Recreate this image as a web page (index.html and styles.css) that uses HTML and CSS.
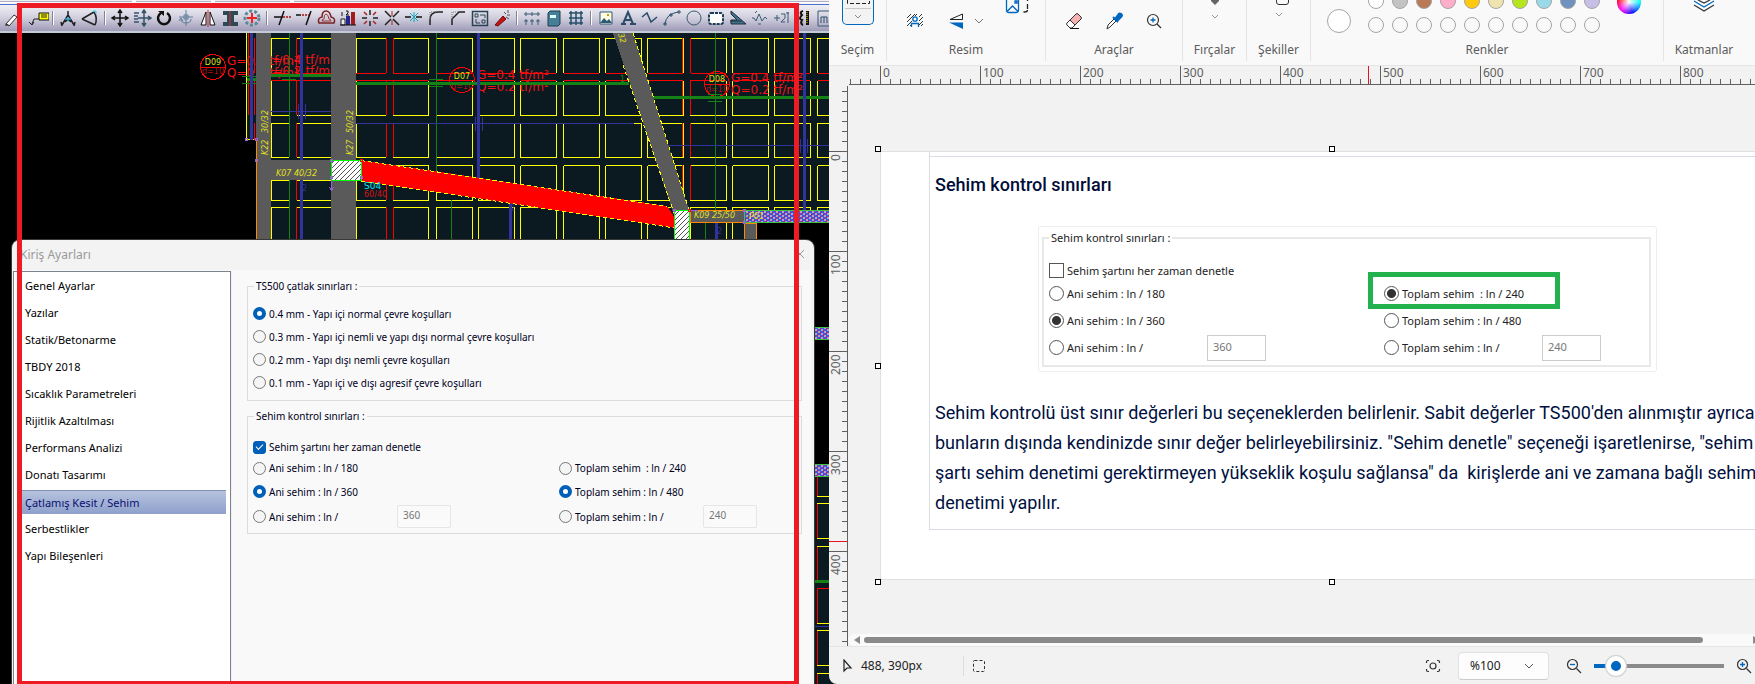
FILE: index.html
```html
<!DOCTYPE html>
<html lang="tr">
<head>
    <meta charset="UTF-8">
    <meta name="viewport" content="width=device-width, initial-scale=1.0">
    <title>Kiriş Ayarları</title>
    <link rel="stylesheet" href="styles.css">
</head>
<body>
    <div class="desktop">

        <!-- CAD window -->
        <section class="cad">
            <div class="cad-tabs"><span></span><span></span><span></span><span></span></div>
            <div class="cad-toolbar">
                <button aria-label="Kalem"><svg viewBox="0 0 22 22"><path d="M6 17l8-9 3 2-8 9z" fill="#fff" stroke="#333"/><path d="M5 19l4-1-3-2z" fill="#333"/></svg></button>
                <button class="first" aria-label="Not"><svg viewBox="0 0 22 22"><path d="M12 6h10v7H12z" fill="#ff0" stroke="#111"/><path d="M14 8h6M14 10h6M12 12H7l-2 5M2 15l3 3 2-3" stroke="#222" fill="none"/></svg></button>
                <i class="sep"></i>
                <button aria-label="Pergel"><svg viewBox="0 0 22 22"><path d="M11 4v4L5 18M11 8l6 10M4 15l1 4M18 15l-1 4M8 15l3-3 3 3" stroke="#222" fill="none" stroke-width="1.5"/><path d="M8 12h6M11 10v5" stroke="#3cf"/></svg></button>
                <button aria-label="Açı"><svg viewBox="0 0 22 22"><path d="M3 12L15 5M3 12l13 6M15 5q4 6 1 13" stroke="#222" fill="none" stroke-width="1.5"/><path d="M14 4h3v3" stroke="#3cf" fill="none"/></svg></button>
                <i class="sep"></i>
                <button aria-label="Taşı"><svg viewBox="0 0 22 22"><path d="M11 4v14M4 11h14M9 6l2-3 2 3M9 16l2 3 2-3M6 9l-3 2 3 2M16 9l3 2-3 2" stroke="#111" fill="none" stroke-width="1.5"/></svg></button>
                <button aria-label="Kopyala"><svg viewBox="0 0 22 22"><path d="M13 4v14M7 11h12M11 6l2-3 2 3M11 16l2 3 2-3M17 9l3 2-3 2M3 6h5M3 9h4M3 12h4M3 15h5" stroke="#34516a" fill="none" stroke-width="1.5"/></svg></button>
                <button aria-label="Döndür"><svg viewBox="0 0 22 22"><path d="M8 6a6 6 0 1 0 6 0" stroke="#111" fill="none" stroke-width="2.5"/><path d="M5 4h6v5z" fill="#111"/></svg></button>
                <button aria-label="Eksen"><svg viewBox="0 0 22 22"><path d="M11 3v16M4 10h14M6 12q0 4 5 4t5-4M4 14l2-3 2 3M9 8h4v4H9z" stroke="#5c7d99" fill="none"/></svg></button>
                <button aria-label="Aynala"><svg viewBox="0 0 22 22"><path d="M9 5v13H4zM13 5v13h5z" fill="#fff" stroke="#111"/><path d="M11 3v17" stroke="#c22"/></svg></button>
                <button aria-label="Kolon"><svg viewBox="0 0 22 22"><path d="M4 4h15v4h-4v7h4v4H4v-4h4V8H4z" fill="#2c4a56"/><path d="M11 4v15" stroke="#e22"/></svg></button>
                <button aria-label="Merkez"><svg viewBox="0 0 22 22"><circle cx="11" cy="11" r="7" fill="none" stroke="#5a8898" stroke-width="3" stroke-dasharray="3 2"/><path d="M11 6v10M6 11h10" stroke="#e22" stroke-width="2"/></svg></button>
                <i class="sep"></i>
                <button aria-label="Kırp"><svg viewBox="0 0 22 22"><path d="M3 10h9M13 4L8 18" stroke="#111" stroke-width="1.5"/><path d="M12 10h8" stroke="#a11" stroke-dasharray="2 1" stroke-width="1.5"/></svg></button>
                <button aria-label="Uzat"><svg viewBox="0 0 22 22"><path d="M3 8h5M18 4l-5 14" stroke="#111" stroke-width="1.5"/><path d="M9 8h7" stroke="#a11" stroke-dasharray="2 1" stroke-width="1.5"/></svg></button>
                <button aria-label="Ofset"><svg viewBox="0 0 22 22"><path d="M4 16q-2-5 3-6q0-6 4-6t5 6q5 1 3 6z" fill="none" stroke="#722" stroke-width="1.5"/><path d="M7 14q0-2 2-2q0-5 2-5t3 5q2 0 2 2z" fill="none" stroke="#933"/></svg></button>
                <button aria-label="Sıra"><svg viewBox="0 0 22 22"><path d="M4 12v6h4v-6z" fill="#eee" stroke="#222"/><path d="M9 9h4v9H9z" fill="#22258c"/><path d="M14 5h4v13h-4z" fill="#a51a1a"/><path d="M3 18h16M5 5v4M9 4h2v2l-2 2h3" stroke="#111" fill="none"/></svg></button>
                <button aria-label="Kır"><svg viewBox="0 0 22 22"><path d="M11 3v5M11 14v5M3 11h5M14 11h5" stroke="#222" stroke-width="1.5"/><path d="M5 5l3 3M17 5l-3 3M5 17l3-3M17 17l-3-3" stroke="#a22" stroke-width="1.5"/></svg></button>
                <button aria-label="Patlat"><svg viewBox="0 0 22 22"><path d="M4 4l6 6M18 4l-6 6M4 18l6-6M18 18l-6-6" stroke="#222" stroke-width="1.5"/><path d="M11 4v5M11 13v5" stroke="#a22"/></svg></button>
                <button aria-label="Birleştir"><svg viewBox="0 0 22 22"><path d="M2 10h6M13 10h6" stroke="#111" stroke-width="1.5"/><path d="M7 6l8 8M15 6l-8 8M11 5v10" stroke="#1ab" /></svg></button>
                <button aria-label="Yuvarlat"><svg viewBox="0 0 22 22"><path d="M5 18v-5q0-8 8-8h5" stroke="#222" fill="none" stroke-width="1.5"/><path d="M5 12V5h6" stroke="#777" fill="none" stroke-dasharray="1 1"/></svg></button>
                <button aria-label="Pah"><svg viewBox="0 0 22 22"><path d="M5 18v-6l7-7h6" stroke="#222" fill="none" stroke-width="1.5"/><path d="M5 12V5h6" stroke="#777" fill="none" stroke-dasharray="1 1"/></svg></button>
                <button aria-label="Blok"><svg viewBox="0 0 22 22"><path d="M3.500 4.500h15v14h-15z" stroke="#2b4254" fill="none" stroke-width="1.5"/><path d="M6 7h3v3H6zM13 13h3v3h-3zM11 8h5v3M7 12v4h4" stroke="#2b4254" fill="none"/></svg></button>
                <button aria-label="Sihirbaz"><svg viewBox="0 0 22 22"><path d="M4 18l8-9 3 3-8 7z" fill="#c11" stroke="#611"/><path d="M13 5l2 2M17 3v3M19 8h-3M15 10l3 2" stroke="#555"/></svg></button>
                <i class="sep"></i>
                <button aria-label="Ölçü"><svg viewBox="0 0 22 22"><path d="M5 5v4M11 5v4M17 5v4M3 7h16M5 12v6M11 12v6M17 12v6M3 14h4M9 14h4M15 14h4" stroke="#3b5a72" fill="none"/></svg></button>
                <button aria-label="Defter"><svg viewBox="0 0 22 22"><path d="M5 6l2-2h10v13l-2 2H5z" fill="#477f99" stroke="#1e3c4c"/><path d="M7 8h6v3H7z" fill="#dff"/></svg></button>
                <button aria-label="Izgara"><svg viewBox="0 0 22 22"><path d="M6 4v14M11 4v14M16 4v14M4 6h14M4 11h14M4 16h14" stroke="#26506c" stroke-width="1.5"/></svg></button>
                <i class="sep"></i>
                <button aria-label="Resim"><svg viewBox="0 0 22 22"><path d="M5 5h12v12H5z" fill="#fffbe0" stroke="#2c5a78"/><path d="M5 16l4-5 3 3 2-2 3 4z" fill="#2c5a78"/><path d="M12 7h2v2h-2z" fill="#c90"/></svg></button>
                <button aria-label="Yazı"><svg viewBox="0 0 22 22"><path d="M4 17h5M13 17h6M6 17l5-12 5 12M8 13h7" stroke="#2b4c66" fill="none" stroke-width="2"/></svg></button>
                <button aria-label="Çizgi"><svg viewBox="0 0 22 22"><path d="M3 10l5-4 4 9 6-5" stroke="#2b4c66" fill="none" stroke-width="1.5"/></svg></button>
                <button aria-label="Yay"><svg viewBox="0 0 22 22"><path d="M4 17q1-10 13-12M3 16h2v2H3zM9 7h2v2H9zM17 4h2v2h-2z" stroke="#2b4c66" fill="none"/></svg></button>
                <button aria-label="Daire"><svg viewBox="0 0 22 22"><circle cx="11" cy="11" r="7" stroke="#3b5a72" fill="none"/></svg></button>
                <button aria-label="Bulut"><svg viewBox="0 0 22 22"><rect x="4" y="6" width="14" height="11" rx="2" stroke="#1e3c54" stroke-width="2" stroke-dasharray="3 1" fill="#fff"/></svg></button>
                <button aria-label="Gönye"><svg viewBox="0 0 22 22"><path d="M4 4l15 13H4v-4h6L4 7z" fill="#41708a" stroke="#1e3040"/><path d="M3 14h12" stroke="#1e3040"/></svg></button>
                <button aria-label="Eğri"><svg viewBox="0 0 22 22"><path d="M3 11h2l2 3 3-7 3 7 3-4 2 2M6 6l2-2M9 17h3" stroke="#3b5a72" fill="none"/></svg></button>
                <button aria-label="Kot"><svg viewBox="0 0 22 22"><path d="M3 11h6M6 8v6M10 7h4v4l-4 4h4M17 5v11M15 6h3" stroke="#3b5a72" fill="none"/></svg></button>
                <button aria-label="Donatı"><svg viewBox="0 0 22 22"><path d="M10 4q-4 1-1 4-4 4 0 5-2 4 1 5" stroke="#111" fill="none" stroke-width="2"/><path d="M13 4h3v14h-3z" fill="#111"/><path d="M14 5v12" stroke="#fd0" stroke-dasharray="1 1"/></svg></button>
                <button aria-label="Metraj"><svg viewBox="0 0 22 22"><path d="M3 4h18v15H3z" fill="none" stroke="#3b5a72"/><path d="M6 16v-6h3v6M9 10h3v6" fill="none" stroke="#2b4c66"/></svg></button>
            </div>

            <div class="cad-view">
                <svg class="drawing" viewBox="0 33 829 651" preserveAspectRatio="xMinYMin slice" aria-label="Kalıp planı">
                    <defs>
                        <g id="bay" fill="none">
                            <path class="y" d="M0 73V38.5H35.500V73M0 81V115.500H35.500V81M0 157.500V123.500H35.500V157.500H0M0 165.500H35.500V200.500H0V165.500M0 240V207.500H35.500V240"/>
                            <path class="r" d="M0 73.500H35.500M0 80.500H35.500"/>
                        </g>
                        <pattern id="hatch" width="5" height="5" patternUnits="userSpaceOnUse">
                            <rect width="5" height="5" fill="#fff"/>
                            <path d="M0 5L5 0M-1 1L1 -1M4 6L6 4" stroke="#555"/>
                        </pattern>
                        <pattern id="wall" width="6" height="4" patternUnits="userSpaceOnUse">
                            <rect width="6" height="4" fill="#b9a3bb"/>
                            <path d="M0 0L6 4" stroke="#2b62f0"/>
                            <path d="M0 4L6 0" stroke="#8a2fa0"/>
                        </pattern>
                    </defs>

                    <!-- slabs -->
                    <path fill="#0a1a20" d="M247 33H829V210H757V240H256V140H247z"/>
                    <path fill="#0a1a20" d="M814 476H829V684H814z"/>
                    <path class="y" d="M271.500 38.500H289M297 38.500H331M271.500 38V73M271.500 81V115.500H289M297 115.500H331M271.500 123.500H289M271.500 123V157.500H289M297 123.500H331M297 157.500H331M271.500 180V200.500H289M271.500 180.500H289M297 180.500H331M297 200.500H331M271.500 240V207.500H289M297 207.500H331M246.500 33V140M246 139.500H256"/>
                    <path class="r" d="M271 73.500H289M297 73.500H331M271 80.500H331M296.500 38V73M296.500 80V115M296.500 123V157M296.500 180V200M296.500 207V240M248.500 33V73M248.500 80V115M254.500 38V73M254.500 80V115M254.500 123V140"/>
                    <path class="y" d="M356.500 73V38.500H386M393 38.500H428.500V73M356.500 81V115.500H386M393 115.500H428.500V81M386 123.500H356.500V157.500H386M393 123.500H428.500V157.500H393M356.500 180V200.500H386M393 165.500H428.500V200.500H393M356.500 240V207.500H386M393 207.500H428.500V240"/>
                    <path class="r" d="M356 73.500H386M393 73.500H428M356 80.500H428M386.500 38V73M386.500 80V115M386.500 123V157M386.500 180V200M386.500 207V240M393.500 38V73M393.500 80V115M393.500 123V157M393.500 180V200M393.500 207V240"/>
                    <use href="#bay" x="436.500"/>
                    <use href="#bay" x="478.500"/>
                    <use href="#bay" x="520.500"/>
                    <use href="#bay" x="563.500"/>
                    <use href="#bay" x="605.500"/>
                    <use href="#bay" x="647.500"/>
                    <use href="#bay" x="690.500"/>
                    <use href="#bay" x="732.500"/>
                    <use href="#bay" x="774.500"/>
                    <use href="#bay" x="817.500"/>
                    <path class="r" d="M682.500 38V73M682.500 80V115M682.500 123V157M682.500 165V200M690.500 38V73M690.500 80V115M690.500 123V157M690.500 165V200"/>

                    <!-- load labels -->
                    <g class="load">
                        <text x="227" y="65">G=0.4 tf/m²</text><text x="227" y="77">Q=0.2 tf/m²</text>
                        <text x="263" y="64">G=0.4 tf/m²</text><text x="263" y="75">Q=0.2 tf/m²</text>
                        <text x="477" y="79">G=0.4 tf/m²</text><text x="477" y="91">Q=0.2 tf/m²</text>
                        <text x="731" y="82">G=0.4 tf/m²</text><text x="731" y="94">Q=0.2 tf/m²</text>
                    </g>
                    <g class="mark">
                        <circle cx="213" cy="67" r="12.500"/><path d="M200 67H226"/><text x="213" y="65">D09</text><text class="d" x="213" y="74">d=10</text>
                        <circle cx="462" cy="80" r="12.500"/><path d="M449 80H475"/><text x="462" y="79">D07</text><text class="d" x="462" y="89">d=10</text>
                        <circle cx="717" cy="84" r="12.500"/><path d="M704 84H730"/><text x="717" y="82">D08</text><text class="d" x="717" y="92">d=10</text>
                    </g>

                    <!-- rebars -->
                    <path fill="#148214" d="M271 74h60v3h-60zM356 82h273v3H356zM653 96h176v3H653zM247 78h9v3h-9z"/>
                    <path class="g" d="M289.500 33V157M289.500 180V240M436.500 33V172M715.500 33V210M451.500 200V240M705.500 223V240M242 76.500H256M242 83.500H256M282 79.500H296M429 79.500H443M429 86.500H443M708 94.500H722M708 101.500H722M250.500 33V135"/>
                    <path fill="#32329b" d="M250 33h3v107h-3zM300 33h3v207h-3zM477 33h3v146h-3zM803 33h3v177h-3zM509 203h3v37h-3zM715 223h3v17h-3z"/>
                    <path class="b" d="M271 111.500H331M298.500 104V119M305.500 104V119M356 123.500H634M475.500 117V131M482.500 117V131M668 145.500H829M800.500 139V153M807.500 139V153"/>
                    <text class="num" x="302" y="191">2</text><text class="num" x="510" y="211">2</text><text class="num" x="717" y="234">2</text><text class="num green" x="620" y="82">1</text>

                    <!-- beams -->
                    <path fill="#5a5a5a" d="M256 33h15v207h-15zM331 33h25v207h-25zM271 160h60v20h-60zM613 33H633L689 210L675 218z"/>
                    <path class="edge" d="M633 33L689 210M623 65L675 216"/>
                    <path fill="#f00" d="M361 160L667 206L675 218V228L361 181z"/>
                    <path class="edge" d="M361 160.500L667 206.500M361 181L675 228"/>
                    <path d="M256.500 140V240" stroke="#f80"/>
                    <rect x="331.500" y="160.500" width="30" height="20" fill="url(#hatch)" stroke="#0f0"/>
                    <rect x="674.500" y="210.500" width="15" height="32" fill="url(#hatch)" stroke="#0f0"/>
                    <rect x="690" y="210.500" width="54" height="12" fill="#5a5a5a" stroke="#f80"/>
                    <path fill="#000" d="M757 223h72v17h-72z"/>
                    <rect x="744.500" y="223" width="12" height="20" fill="#5a5a5a" stroke="#f80"/>
                    <g fill="url(#wall)" stroke="#3fc43f">
                        <rect x="744.500" y="210.500" width="90" height="12"/>
                        <rect x="812" y="327.500" width="20" height="12"/>
                        <rect x="812" y="464.500" width="20" height="12"/>
                    </g>
                    <path class="r" d="M817.500 477V496M817.500 503V538M817.500 546V580M817.500 588V623M817.500 630V665M817.500 673V684M817 588.500H829"/>
                    <path class="y" d="M817 496.500H829M817 503.500H829M817 538.500H829M817 546.500H829M817 623.500H829M817 630.500H829M817 665.500H829M817 673.500H829"/>
                    <path fill="#148214" d="M814 580h15v3h-15z"/>
                    <path class="b" d="M814 626.500H829"/>

                    <!-- grips -->
                    <path class="grip" d="M245.500 138.500h2v2h-2zM255.500 138.500h2v2h-2zM255.500 159.500h2v2h-2zM330.500 159.500h2v2h-2zM330.500 176.500h2v2h-2zM360.500 176.500h2v2h-2zM673.500 209.500h2v2h-2zM743.500 209.500h2v2h-2zM743.500 221.500h2v2h-2zM331.500 180V189M329 187l2.500 3 2.500-3M690 210.500H698"/>
                    <path d="M360.500 159.500h2v2h-2zM688.500 209.500h2v2h-2z" fill="none" stroke="#f00"/>

                    <g class="beam-name">
                        <text x="276" y="176">K07 40/32</text>
                        <text x="694" y="218">K09 25/50</text>
                        <text x="749" y="219">P01</text>
                        <text transform="translate(268 155) rotate(-90)">K22</text>
                        <text transform="translate(268 133) rotate(-90)">30/32</text>
                        <text transform="translate(353 155) rotate(-90)">K27</text>
                        <text transform="translate(353 133) rotate(-90)">50/32</text>
                        <text transform="translate(618 34) rotate(73)">32</text>
                    </g>
                    <text class="col-name" x="364" y="189">S04</text>
                    <text class="col-name size" x="364" y="197">60/40</text>
                </svg>

                <!-- Beam settings dialog -->
                <div class="dialog">
                    <div class="dialog-title">
                        <span>Kiriş Ayarları</span>
                        <button class="close" aria-label="Kapat"><svg viewBox="0 0 10 10"><path d="M1 1l8 8M9 1L1 9" stroke="#999"/></svg></button>
                    </div>
                    <div class="dialog-body">
                        <nav class="pages">
                            <a href="#">Genel Ayarlar</a>
                            <a href="#">Yazılar</a>
                            <a href="#">Statik/Betonarme</a>
                            <a href="#">TBDY 2018</a>
                            <a href="#">Sıcaklık Parametreleri</a>
                            <a href="#">Rijitlik Azaltılması</a>
                            <a href="#">Performans Analizi</a>
                            <a href="#">Donatı Tasarımı</a>
                            <a href="#" class="active">Çatlamış Kesit / Sehim</a>
                            <a href="#">Serbestlikler</a>
                            <a href="#">Yapı Bileşenleri</a>
                        </nav>
                        <form class="panel">
                            <fieldset class="group crack">
                                <legend>TS500 çatlak sınırları :</legend>
                                <label><input type="radio" name="crack" checked>0.4 mm - Yapı içi normal çevre koşulları</label>
                                <label><input type="radio" name="crack">0.3 mm - Yapı içi nemli ve yapı dışı normal çevre koşulları</label>
                                <label><input type="radio" name="crack">0.2 mm - Yapı dışı nemli çevre koşulları</label>
                                <label><input type="radio" name="crack">0.1 mm - Yapı içi ve dışı agresif çevre koşulları</label>
                            </fieldset>
                            <fieldset class="group">
                                <legend>Sehim kontrol sınırları :</legend>
                                <div class="limits">
                                    <label class="wide"><input type="checkbox" checked>Sehim şartını her zaman denetle</label>
                                    <label><input type="radio" name="ani">Ani sehim : ln / 180</label>
                                    <label><input type="radio" name="toplam">Toplam sehim &nbsp;: ln / 240</label>
                                    <label><input type="radio" name="ani" checked>Ani sehim : ln / 360</label>
                                    <label><input type="radio" name="toplam" checked>Toplam sehim : ln / 480</label>
                                    <div class="custom"><label><input type="radio" name="ani">Ani sehim : ln /</label><input type="text" value="360" aria-label="Ani sehim sınırı" disabled></div>
                                    <div class="custom"><label><input type="radio" name="toplam">Toplam sehim : ln /</label><input type="text" value="240" aria-label="Toplam sehim sınırı" disabled></div>
                                </div>
                            </fieldset>
                        </form>
                    </div>
                </div>
            </div>
            <div class="red-frame"></div>
        </section>

        <!-- Paint window -->
        <section class="paint">
            <div class="ribbon">
                <div class="rgroup">
                    <div class="tools center">
                        <button class="select-tool" aria-label="Seçim"><svg viewBox="0 0 30 24"><path d="M4.500 0V3.500H26.500V0" fill="none" stroke="#222" stroke-dasharray="4 2"/><path d="M2 8.500H28" stroke="#c8c8c8"/><path d="M12 15l3 3 3-3" fill="none" stroke="#8a8a8a"/></svg></button>
                    </div>
                    <span>Seçim</span>
                </div>
                <div class="rgroup">
                    <div class="tools picture">
                        <button class="tool" aria-label="Arka planı kaldır"><svg viewBox="0 0 18 18"><path d="M1 6l4-4M1 10l8-8M1 14l5-5M4 14l2-2M9 4l2-2M13 5l3-3M13 9l4-4M13 13l4-4M15 14l2-2" stroke="#333"/><circle cx="9" cy="7" r="2.200" fill="none" stroke="#0067c0" stroke-width="1.300"/><path d="M5.500 15v-3.500h7V15" fill="none" stroke="#0067c0" stroke-width="1.300"/></svg></button>
                        <button class="flip" aria-label="Döndür"><svg viewBox="0 0 18 18"><path d="M3 7.500L15.500 2v5.500z" fill="none" stroke="#222"/><path d="M2 10.500h14V17z" fill="#0067c0"/></svg><svg class="chev" viewBox="0 0 10 10"><path d="M1 3l4 4 4-4" fill="none" stroke="#777"/></svg></button>
                        <button class="resize" aria-label="Yeniden boyutlandır"><svg viewBox="0 0 24 14"><path d="M1.500 0V10q0 2.500 2.500 2.500h7q2.500 0 2.500-2.500V0M2.500 11l5-5 5 5M10 1h2v2h-2z" fill="none" stroke="#0067c0" stroke-width="1.300"/><path d="M22.500 0v1M22.500 4v5M22.500 10q0 2-3 2h-1" fill="none" stroke="#222" stroke-width="1.300"/></svg></button>
                    </div>
                    <span>Resim</span>
                </div>
                <div class="rgroup">
                    <div class="tools center">
                        <button class="tool" aria-label="Silgi"><svg viewBox="0 0 18 18"><path d="M5 8l6-6q1-1 2 0l3 3q1 1 0 2l-6 6z" fill="#f7b0b0" stroke="#333"/><path d="M5 8l5 5-3 3H5l-3-3q-1-1 0-2z" fill="#fff" stroke="#333"/><path d="M5 16.500h9" stroke="#111"/></svg></button>
                        <button class="tool" aria-label="Renk seçici"><svg viewBox="0 0 18 18"><path d="M9 7l2 2-6 6-3 2 1-4z" fill="#fff" stroke="#333"/><path d="M8 5l5 5M10 7l3-4q1-2 3-1t0 3l-4 4z" fill="#0067c0" stroke="#0067c0" stroke-width="2"/></svg></button>
                        <button class="tool" aria-label="Büyüteç"><svg viewBox="0 0 18 18"><circle cx="8" cy="8" r="5.500" fill="none" stroke="#333" stroke-width="1.200"/><path d="M12 12l4 4" stroke="#333" stroke-width="1.300"/><path d="M8 5.500v5M5.500 8h5" stroke="#0067c0" stroke-width="1.300"/></svg></button>
                    </div>
                    <span>Araçlar</span>
                </div>
                <div class="rgroup">
                    <div class="tools center">
                        <button class="drop" aria-label="Fırçalar"><svg viewBox="0 0 24 24"><path d="M8 0h8v1l-4 4-4-4z" fill="#666"/><path d="M9 15l3 3 3-3" fill="none" stroke="#999"/></svg></button>
                    </div>
                    <span>Fırçalar</span>
                </div>
                <div class="rgroup">
                    <div class="tools center">
                        <button class="drop" aria-label="Şekiller"><svg viewBox="0 0 24 24"><path d="M9.500 0v2q0 2.500 2.500 2.500h7q2.500 0 2.500-2.500V0" fill="none" stroke="#333"/><path d="M9 13l3 3 3-3" fill="none" stroke="#999"/></svg></button>
                    </div>
                    <span>Şekiller</span>
                </div>
                <div class="rgroup">
                    <div class="tools colors">
                        <button class="current" aria-label="Renk 2"></button>
                        <div class="swatches">
                            <button class="white" aria-label="Beyaz"></button>
                            <button class="gray" aria-label="Gri"></button>
                            <button class="brown" aria-label="Kahverengi"></button>
                            <button class="pink" aria-label="Pembe"></button>
                            <button class="gold" aria-label="Altın"></button>
                            <button class="tan" aria-label="Açık sarı"></button>
                            <button class="lime" aria-label="Limon"></button>
                            <button class="aqua" aria-label="Açık turkuaz"></button>
                            <button class="steel" aria-label="Mavi gri"></button>
                            <button class="lavender" aria-label="Lavanta"></button>
                            <button aria-label="Boş 1"></button>
                            <button aria-label="Boş 2"></button>
                            <button aria-label="Boş 3"></button>
                            <button aria-label="Boş 4"></button>
                            <button aria-label="Boş 5"></button>
                            <button aria-label="Boş 6"></button>
                            <button aria-label="Boş 7"></button>
                            <button aria-label="Boş 8"></button>
                            <button aria-label="Boş 9"></button>
                            <button aria-label="Boş 10"></button>
                        </div>
                        <button class="wheel" aria-label="Renkleri düzenle"></button>
                    </div>
                    <span>Renkler</span>
                </div>
                <div class="rgroup">
                    <div class="tools center">
                        <button class="drop" aria-label="Katmanlar"><svg viewBox="0 0 24 24"><path d="M6 0l6 3 6-3M2 5l10 6 10-6" fill="none" stroke="#333" stroke-width="1.200"/><path d="M2 1l10 6 10-6" fill="none" stroke="#0067c0" stroke-width="1.200"/></svg></button>
                    </div>
                    <span>Katmanlar</span>
                </div>
            </div>

            <div class="workspace">
                <div class="ruler-x">
                    <span>0</span><span>100</span><span>200</span><span>300</span><span>400</span><span>500</span><span>600</span><span>700</span><span>800</span>
                    <i class="pos"></i>
                </div>
                <div class="ruler-y">
                    <span>0</span><span>100</span><span>200</span><span>300</span><span>400</span>
                    <i class="pos"></i>
                </div>
                <div class="stage">
                    <div class="page">
                        <article class="doc">
                            <h2>Sehim kontrol sınırları</h2>
                            <div class="figure">
                                <fieldset class="group">
                                    <legend>Sehim kontrol sınırları :</legend>
                                    <div class="limits">
                                        <label class="wide"><input type="checkbox">Sehim şartını her zaman denetle</label>
                                        <label><input type="radio" name="ani2">Ani sehim : ln / 180</label>
                                        <label class="marked"><input type="radio" name="toplam2" checked>Toplam sehim &nbsp;: ln / 240</label>
                                        <label><input type="radio" name="ani2" checked>Ani sehim : ln / 360</label>
                                        <label><input type="radio" name="toplam2">Toplam sehim : ln / 480</label>
                                        <div class="custom"><label><input type="radio" name="ani2">Ani sehim : ln /</label><input type="text" value="360" aria-label="Ani sehim sınırı" disabled></div>
                                        <div class="custom"><label><input type="radio" name="toplam2">Toplam sehim : ln /</label><input type="text" value="240" aria-label="Toplam sehim sınırı" disabled></div>
                                    </div>
                                </fieldset>
                            </div>
                            <p>Sehim kontrolü üst sınır değerleri bu seçeneklerden belirlenir. Sabit değerler TS500'den alınmıştır ayrıca bunların dışında kendinizde sınır değer belirleyebilirsiniz. "Sehim denetle" seçeneği işaretlenirse, "sehim şartı sehim denetimi gerektirmeyen yükseklik koşulu sağlansa" da &nbsp;kirişlerde ani ve zamana bağlı sehim denetimi yapılır.</p>
                        </article>
                        <i class="handle tl"></i><i class="handle tc"></i><i class="handle ml"></i><i class="handle bl"></i><i class="handle bc"></i>
                    </div>
                    <div class="scrollbar">
                        <svg viewBox="0 0 6 8"><path d="M6 0v8L0 4z" fill="#8a8a8a"/></svg>
                        <div class="thumb"></div>
                        <svg viewBox="0 0 6 8"><path d="M0 0v8l6-4z" fill="#8a8a8a"/></svg>
                    </div>
                </div>
            </div>

            <div class="status">
                <div class="status-pos">
                    <svg viewBox="0 0 14 14"><path d="M4 1v11l3-3h4z" fill="none" stroke="#222" stroke-width="1.200"/></svg>
                    <span>488, 390px</span>
                </div>
                <svg class="marquee" viewBox="0 0 14 14"><rect x="1.500" y="1.500" width="11" height="11" rx="1" fill="none" stroke="#333" stroke-dasharray="3 2"/></svg>
                <button class="fit" aria-label="Pencereye sığdır"><svg viewBox="0 0 16 16"><path d="M1.500 5V4q0-1.500 1.500-1.500h1M12 2.500h1q1.500 0 1.500 1.500v1M14.500 11v1q0 1.500-1.500 1.500h-1M4 13.500H3q-1.500 0-1.500-1.500v-1" fill="none" stroke="#333" stroke-width="1.200"/><circle cx="8" cy="8" r="3" fill="none" stroke="#333" stroke-width="1.200"/></svg></button>
                <div class="zoom-select">
                    <select aria-label="Yakınlaştırma"><option>%100</option></select>
                    <svg viewBox="0 0 10 10"><path d="M1 3l4 4 4-4" fill="none" stroke="#555"/></svg>
                </div>
                <button aria-label="Uzaklaştır"><svg viewBox="0 0 16 16"><circle cx="6.500" cy="6.500" r="5" fill="none" stroke="#333" stroke-width="1.200"/><path d="M10.500 10.500l4.500 4.500" stroke="#333" stroke-width="1.200"/><path d="M4 6.500h5" stroke="#0067c0" stroke-width="1.300"/></svg></button>
                <input class="zoom" type="range" min="0" max="100" value="11" aria-label="Yakınlaştırma düzeyi">
                <button aria-label="Yakınlaştır"><svg viewBox="0 0 16 16"><circle cx="6.500" cy="6.500" r="5" fill="none" stroke="#333" stroke-width="1.200"/><path d="M10.500 10.500l4.500 4.500" stroke="#333" stroke-width="1.200"/><path d="M4 6.500h5M6.500 4v5" stroke="#0067c0" stroke-width="1.300"/></svg></button>
            </div>
        </section>
    </div>
</body>
</html>
```

FILE: styles.css
```css
*,
*::before,
*::after {
    box-sizing: border-box;
}
body {
    margin: 0;
    font-family: "Noto Sans", sans-serif;
    font-size: 12px;
    overflow: hidden;
}
button {
    background: none;
    border: none;
    padding: 0;
    font: inherit;
}
svg {
    display: block;
}
.desktop {
    display: grid;
    grid-template-columns: 829fr 926fr;
    height: 100vh;
    background: #0a1a20;
}

/* CAD window */
.cad {
    position: relative;
    display: flex;
    flex-direction: column;
    min-width: 0;
    overflow: hidden;
    background: #000;
}
.cad-tabs {
    display: grid;
    grid-template-columns: 134fr 76fr 76fr 543fr;
    gap: 4px;
    height: 5px;
    background: #fafafc;
    border-bottom: 1px solid #4a6fd0;
}
.cad-tabs span {
    height: 2px;
    background: #eeeef4;
    border-bottom: 1px solid #b0b0c0;
}
.cad-toolbar {
    display: flex;
    align-items: center;
    flex: none;
    height: 28px;
    background: linear-gradient(#f0f0f5, #d0cedd 50%, #9f9bb8);
    border-bottom: 2px solid #c3cbd6;
}
.cad-toolbar button {
    flex: none;
    width: 22px;
    height: 22px;
}
.cad-toolbar svg {
    width: 22px;
    height: 22px;
}
.cad-toolbar .first {
    margin-left: 5px;
}
.sep {
    flex: none;
    width: 2px;
    height: 14px;
    margin: 0 3px;
    background: #85839a;
    border-right: 1px solid #fff;
}
.cad-view {
    position: relative;
    flex: 1;
    min-height: 0;
}
.drawing {
    width: 100%;
    height: 100%;
    font-family: "DejaVu Sans", sans-serif;
    shape-rendering: crispEdges;
}
.drawing .y {
    stroke: #ff0;
    fill: none;
}
.drawing .r {
    stroke: #f00;
    fill: none;
}
.drawing .g {
    stroke: #148214;
    fill: none;
}
.drawing .b {
    stroke: #32329b;
    fill: none;
}
.drawing .edge {
    stroke: #ff0;
    stroke-dasharray: 4 3;
    fill: none;
}
.drawing .grip {
    stroke: #9a5fd0;
    fill: none;
}
.load {
    font-size: 12px;
    fill: #f0141a;
}
.mark {
    font-size: 8px;
    text-anchor: middle;
    fill: #d8e020;
    stroke: none;
}
.mark circle,
.mark path {
    fill: none;
    stroke: #f00;
}
.mark .d {
    fill: #b01218;
}
.num {
    font-size: 8px;
    fill: #32329b;
}
.num.green {
    fill: #148214;
}
.beam-name {
    font-size: 8px;
    font-style: italic;
    fill: #e0e020;
}
.col-name {
    font-size: 9px;
    fill: #00e8f8;
}
.col-name.size {
    font-size: 8px;
    fill: #d8141a;
}
.red-frame {
    position: absolute;
    inset: 3px 30px -2px 17px;
    border: 5px solid #ed1c24;
    pointer-events: none;
}

/* Dialog */
.dialog {
    position: absolute;
    top: 207px;
    left: 12px;
    right: 15px;
    bottom: 0;
    display: flex;
    flex-direction: column;
    padding: 0 3px 0 1px;
    background: #f3f3f3;
    border-radius: 8px 8px 0 0;
    box-shadow: 0 0 0 1px #383838;
}
.dialog-title {
    display: flex;
    align-items: center;
    justify-content: space-between;
    height: 30px;
    padding: 0 6px 2px 7px;
    color: #999;
}
.close svg {
    width: 10px;
    height: 10px;
}
.dialog-body {
    display: flex;
    flex: 1;
    min-height: 0;
    background: #f9f9f9;
}
.pages {
    display: flex;
    flex-direction: column;
    gap: 3px;
    width: 218px;
    margin-top: 1px;
    padding: 2px 4px 0 3px;
    background: #fff;
    border: 1px solid #7c838e;
    border-bottom: none;
}
.pages a {
    height: 24px;
    padding-left: 8px;
    line-height: 24px;
    font-size: 11px;
    color: #000;
    text-decoration: none;
}
.pages .active {
    color: #0a1070;
    background: linear-gradient(#b6c2de, #8ea0cc);
    border-top: 1px solid #8090b4;
    line-height: 23px;
}
.panel {
    flex: 1;
    padding: 8px 9px 0 15px;
    border-left: 1px solid #f0f0f0;
}

/* Group boxes */
.group {
    margin: 0 0 7px;
    padding: 8px 5px 6px;
    border: 1px solid #dcdcdc;
    font-family: "Noto Sans", sans-serif;
    font-size: 10px;
    color: #00001c;
}
.group legend {
    margin-left: 1px;
    padding: 0 2px;
    line-height: 16px;
}
.group label {
    display: flex;
    align-items: center;
    gap: 3px;
    white-space: nowrap;
}
.crack label {
    height: 23px;
}
.limits {
    display: grid;
    grid-template-columns: 306px 1fr;
    grid-template-rows: 20px 22px 25px 25px;
    padding-top: 5px;
    margin-bottom: -2px;
}
.limits .wide {
    grid-column: 1 / 3;
}
.custom {
    display: flex;
    align-items: center;
}
.custom label {
    width: 144px;
}
.group input[type="text"] {
    width: 54px;
    height: 23px;
    padding: 0 5px 3px;
    background: #fafafa;
    border: 1px solid #e6e6e6;
    border-radius: 2px;
    font: inherit;
    color: #777;
}
.group input[type="radio"],
.group input[type="checkbox"] {
    appearance: none;
    flex: none;
    width: 13px;
    height: 13px;
    margin: 0;
    background: #f5f5f5;
    border: 1px solid #777;
    border-radius: 50%;
}
.group input[type="radio"]:checked {
    background: #fff;
    border: 4px solid #005fb8;
}
.group input[type="checkbox"] {
    border-radius: 3px;
}
.group input[type="checkbox"]:checked {
    display: grid;
    place-items: center;
    background: #005fb8;
    border-color: #005fb8;
}
.group input[type="checkbox"]:checked::before {
    content: "";
    width: 7px;
    height: 4px;
    margin-bottom: 2px;
    border-left: 1px solid #fff;
    border-bottom: 1px solid #fff;
    transform: rotate(-45deg);
}

/* Paint window */
.paint {
    display: flex;
    flex-direction: column;
    min-width: 0;
    overflow: hidden;
    background: #f2f2f2;
    border-radius: 0 0 0 8px;
}
.ribbon {
    display: grid;
    grid-template-columns: 58fr 159fr 137fr 64fr 64fr 353fr 80fr;
    flex: none;
    height: 66px;
    padding-right: 11px;
    overflow: hidden;
    background: #f9f9f9;
    border-bottom: 1px solid #e5e5e5;
}
.rgroup {
    display: flex;
    flex-direction: column;
    height: 61px;
    min-width: 0;
    border-right: 1px solid #e5e5e5;
    text-align: center;
    color: #5c5c5c;
}
.rgroup:last-child {
    border-right: none;
}
.rgroup > span {
    line-height: 18px;
}
.tools {
    display: flex;
    height: 41px;
}
.tools.center {
    justify-content: center;
}
.tool {
    display: grid;
    place-items: center;
    width: 40px;
    height: 42px;
}
.tool svg {
    width: 18px;
    height: 18px;
}
.select-tool {
    width: 32px;
    height: 25px;
    background: #f3f3f3;
    border: 1px solid #0067c0;
    border-top: none;
    border-radius: 0 0 5px 5px;
}
.select-tool svg {
    width: 30px;
    height: 24px;
}
.picture {
    padding: 0 16px 0 8px;
}
.flip {
    display: flex;
    align-items: center;
    gap: 9px;
    height: 42px;
    margin-left: 12px;
}
.flip svg {
    width: 18px;
    height: 18px;
}
.flip .chev {
    width: 10px;
    height: 10px;
}
.resize {
    align-self: flex-start;
    margin-left: auto;
}
.resize svg {
    width: 24px;
    height: 14px;
}
.drop {
    align-self: flex-start;
}
.drop svg {
    width: 24px;
    height: 24px;
}
.colors {
    align-items: flex-end;
    gap: 17px;
    padding: 0 0 8px 16px;
}
.colors button {
    flex: none;
    border: 1px solid #a5a5a5;
    border-radius: 50%;
}
.colors .current {
    width: 24px;
    height: 24px;
    background: #fff;
}
.swatches {
    display: grid;
    grid-template-columns: repeat(10, 16px);
    gap: 8px;
}
.swatches button {
    width: 16px;
    height: 16px;
}
.swatches .white { background: #fff; }
.swatches .gray { background: #c3c3c3; }
.swatches .brown { background: #b97a57; }
.swatches .pink { background: #ffaec9; }
.swatches .gold { background: #ffc90e; }
.swatches .tan { background: #efe4b0; }
.swatches .lime { background: #b5e61d; }
.swatches .aqua { background: #99d9ea; }
.swatches .steel { background: #7092be; }
.swatches .lavender { background: #c8bfe7; }
.colors .wheel {
    width: 24px;
    height: 24px;
    margin-bottom: 19px;
    border: none;
    background: radial-gradient(circle, #fff, transparent 70%), conic-gradient(#8f0, #0ff 25%, #00f 45%, #f0f 62%, #f00 80%, #ff0 92%, #8f0);
}

.workspace {
    display: grid;
    grid-template-columns: 19px 1fr;
    grid-template-rows: 19px 1fr;
    flex: 1;
    min-height: 0;
    color: #606060;
}
.ruler-x {
    grid-column: 2;
    position: relative;
    display: flex;
    margin-left: 1px;
    padding-left: 31px;
    overflow: hidden;
    border-bottom: 1px solid #606060;
    background: linear-gradient(to right, #606060 1px, transparent 1px) 1px 100% / 10px 5px repeat-x;
}
.ruler-x span {
    flex: none;
    width: 100px;
    padding-left: 2px;
    border-left: 1px solid #606060;
    line-height: 14px;
}
.ruler-y {
    position: relative;
    display: flex;
    flex-direction: column;
    margin-top: 1px;
    padding-top: 65px;
    overflow: hidden;
    border-right: 1px solid #606060;
    background: linear-gradient(#606060 1px, transparent 1px) 100% 5px / 5px 10px repeat-y;
}
.ruler-y span {
    flex: none;
    height: 100px;
    padding-bottom: 2px;
    border-bottom: 1px solid #606060;
    line-height: 14px;
    writing-mode: vertical-rl;
    transform: rotate(180deg);
    text-align: right;
}
.pos {
    position: absolute;
    background: #e81123;
}
.ruler-x .pos {
    left: 519px;
    width: 1px;
    height: 18px;
}
.ruler-y .pos {
    top: 455px;
    width: 18px;
    height: 1px;
}
.stage {
    display: flex;
    flex-direction: column;
    justify-content: space-between;
    min-width: 0;
    padding: 66px 0 0 32px;
    overflow: hidden;
}
.page {
    position: relative;
    width: calc(100% + 28px);
    padding: 0 0 49px 48px;
    background: #fff;
    border: 1px solid #e0e0e0;
}
.doc {
    padding: 4px 0 11px;
    border-left: 1px solid #dcdce4;
    border-bottom: 1px solid #dcdce4;
    font-family: Roboto, sans-serif;
    font-size: 18px;
    color: #001040;
}
.doc h2 {
    margin: 0;
    padding: 13px 5px 0;
    border-top: 1px solid #dcdce4;
    font-size: 18px;
    font-weight: 500;
    line-height: 30px;
    color: #000d38;
}
.doc p {
    margin: 0;
    padding: 26px 5px 0;
    line-height: 30px;
}
.figure {
    width: 619px;
    margin: 26px 0 0 108px;
    padding: 3px 5px 4px 3px;
    border: 1px solid #eee;
    border-radius: 3px;
}
.figure .group {
    margin: 0;
    padding: 8px 5px 7px;
    border: 2px solid #e8e8e8;
    font-size: 11px;
    color: #222;
}
.figure legend {
    margin-left: 0;
}
.figure .limits {
    grid-template-columns: 335px 1fr;
    grid-template-rows: 22px 25px 29px 25px;
    padding-top: 5px;
}
.figure .group input[type="radio"],
.figure .group input[type="checkbox"] {
    width: 15px;
    height: 15px;
    background: #fff;
    border: 1px solid #555;
}
.figure .group input[type="checkbox"] {
    border-radius: 0;
}
.figure .group input[type="radio"]:checked {
    background: radial-gradient(circle, #333 4px, #fff 5px);
}
.figure .custom label {
    width: 158px;
}
.figure .group input[type="text"] {
    width: 59px;
    height: 26px;
    background: #fff;
    border: 1px solid #ccc;
    border-radius: 0;
}
.marked {
    position: relative;
}
.marked::after {
    content: "";
    position: absolute;
    top: -9px;
    left: -16px;
    width: 192px;
    height: 37px;
    border: 5px solid #22b14c;
}
.handle {
    position: absolute;
    width: 6px;
    height: 6px;
    background: #fff;
    border: 1px solid #000;
}
.tl { top: -6px; left: -6px; }
.tc { top: -6px; left: calc(50% - 3px); }
.ml { top: calc(50% - 3px); left: -6px; }
.bl { bottom: -6px; left: -6px; }
.bc { bottom: -6px; left: calc(50% - 3px); }
.scrollbar {
    display: flex;
    align-items: center;
    gap: 4px;
    height: 12px;
    margin-left: -32px;
    padding-left: 6px;
    background: #fafafa;
    border-radius: 6px 0 0 6px;
}
.scrollbar svg {
    flex: none;
    width: 6px;
    height: 8px;
}
.thumb {
    flex: 1;
    height: 6px;
    margin-right: 46px;
    background: #8a8a8a;
    border-radius: 3px;
}
.scrollbar svg:last-child {
    margin-right: -4px;
}

.status {
    display: flex;
    align-items: center;
    flex: none;
    height: 38px;
    padding: 0 3px 0 11px;
    border-top: 1px solid #e5e5e5;
    color: #222;
}
.status-pos {
    display: flex;
    align-items: center;
    gap: 7px;
    width: 124px;
    height: 20px;
    border-right: 1px solid #dcdcdc;
}
.status svg {
    width: 14px;
    height: 14px;
}
.marquee {
    margin-left: 8px;
}
.status button svg {
    width: 16px;
    height: 16px;
}
.fit {
    margin-left: auto;
}
.zoom-select {
    display: flex;
    align-items: center;
    width: 91px;
    height: 28px;
    margin: 0 17px;
    padding-right: 14px;
    background: #fdfdfd;
    border: 1px solid #e0e0e0;
    border-bottom-color: #ccc;
    border-radius: 4px;
}
.zoom-select select {
    appearance: none;
    flex: 1;
    min-width: 0;
    padding: 0 0 0 11px;
    background: none;
    border: none;
    font: inherit;
    color: #222;
}
.zoom-select svg {
    width: 10px;
    height: 10px;
}
.zoom {
    appearance: none;
    width: 130px;
    height: 20px;
    margin: 0 12px;
    background: linear-gradient(to right, #0067c0 16px, #8a8a8a 16px) center / 100% 4px no-repeat;
    border-radius: 2px;
}
.zoom::-webkit-slider-thumb {
    appearance: none;
    width: 20px;
    height: 20px;
    background: #0067c0;
    border: 5px solid #fff;
    border-radius: 50%;
    box-shadow: 0 0 1px 1px #ccc;
}
```
